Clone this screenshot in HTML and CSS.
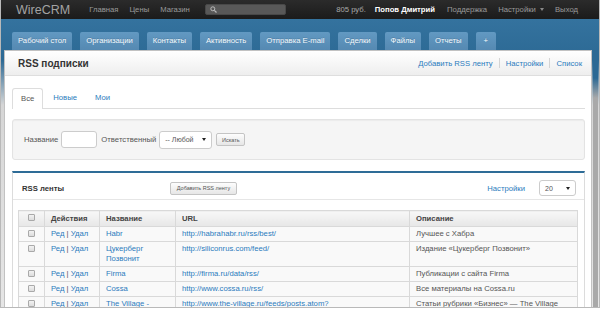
FILE: index.html
```html
<!DOCTYPE html>
<html>
<head>
	<meta charset="utf-8">
	<title>RSS подписки - WireCRM</title>
	<link rel="stylesheet" href="styles.css">
</head>
<body>
<div class="frame">
	<!-- top bar -->
	<div class="topbar">
		<a class="brand" href="#">WireCRM</a>
		<a class="toplink" href="#">Главная</a>
		<a class="toplink" href="#">Цены</a>
		<a class="toplink" href="#">Магазин</a>
		<div class="search">
			<svg width="7" height="7" viewBox="0 0 7 7"><circle cx="2.8" cy="2.8" r="2" fill="none" stroke="#bbb" stroke-width="1"/><path d="M4.3 4.3L6.5 6.5" stroke="#bbb" stroke-width="1.2"/></svg>
		</div>
		<div class="topright">
			<span class="balance">805 руб.</span>
			<b class="user">Попов Дмитрий</b>
			<a class="toplink" href="#">Поддержка</a>
			<a class="toplink" href="#">Настройки <span class="caret"></span></a>
			<a class="toplink last" href="#">Выход</a>
		</div>
	</div>

	<!-- main sections -->
	<div class="mainnav">
		<a href="#">Рабочий стол</a>
		<a href="#">Организации</a>
		<a href="#">Контакты</a>
		<a href="#">Активность</a>
		<a href="#">Отправка E-mail</a>
		<a href="#">Сделки</a>
		<a href="#">Файлы</a>
		<a href="#">Отчеты</a>
		<a class="plus" href="#">+</a>
	</div>

	<div class="workspace">
		<div class="page">
			<div class="page-head">
				<h1>RSS подписки</h1>
				<div class="head-links">
					<a href="#">Добавить RSS ленту</a><span class="sep"></span><a href="#">Настройки</a><span class="sep"></span><a href="#">Список</a>
				</div>
			</div>
			<div class="page-body">
				<div class="tabs">
					<span class="tab active">Все</span>
					<a class="tab" href="#">Новые</a>
					<a class="tab" href="#">Мои</a>
				</div>

				<div class="well">
					<span>Название</span>
					<span class="field"></span>
					<span>Ответственный</span>
					<span class="select wide">-- Любой <i class="arrow"></i></span>
					<span class="btn">Искать</span>
				</div>

				<div class="box">
					<div class="box-head">
						<b class="box-title">RSS ленты</b>
						<span class="btn add">Добавить RSS ленту</span>
						<a class="box-settings" href="#">Настройки</a>
						<span class="select small">20 <i class="arrow"></i></span>
					</div>
					<table class="grid">
						<colgroup>
							<col style="width:26px"><col style="width:55px"><col style="width:76px"><col style="width:234px"><col>
						</colgroup>
						<tr>
							<th class="c"><span class="cb"></span></th>
							<th>Действия</th>
							<th>Название</th>
							<th>URL</th>
							<th>Описание</th>
						</tr>
						<tr>
							<td class="c"><span class="cb"></span></td>
							<td><a href="#">Ред</a> | <a href="#">Удал</a></td>
							<td><a href="#">Habr</a></td>
							<td><a href="#">http://habrahabr.ru/rss/best/</a></td>
							<td>Лучшее с Хабра</td>
						</tr>
						<tr>
							<td class="c"><span class="cb"></span></td>
							<td><a href="#">Ред</a> | <a href="#">Удал</a></td>
							<td><a href="#">Цукерберг Позвонит</a></td>
							<td><a href="#">http://siliconrus.com/feed/</a></td>
							<td>Издание «Цукерберг Позвонит»</td>
						</tr>
						<tr>
							<td class="c"><span class="cb"></span></td>
							<td><a href="#">Ред</a> | <a href="#">Удал</a></td>
							<td><a href="#">Firma</a></td>
							<td><a href="#">http://firma.ru/data/rss/</a></td>
							<td>Публикации с сайта Firma</td>
						</tr>
						<tr>
							<td class="c"><span class="cb"></span></td>
							<td><a href="#">Ред</a> | <a href="#">Удал</a></td>
							<td><a href="#">Cossa</a></td>
							<td><a href="#">http://www.cossa.ru/rss/</a></td>
							<td>Все материалы на Cossa.ru</td>
						</tr>
						<tr>
							<td class="c"><span class="cb"></span></td>
							<td><a href="#">Ред</a> | <a href="#">Удал</a></td>
							<td><a href="#">The Village -</a></td>
							<td><a href="#">http://www.the-village.ru/feeds/posts.atom?</a></td>
							<td>Статьи рубрики «Бизнес» — The Village</td>
						</tr>
					</table>
				</div>
			</div>
		</div>
		<div class="rail"></div>
	</div>
</div>
</body>
</html>
```

FILE: styles.css
```css
* { box-sizing: border-box; }
html, body { margin: 0; padding: 0; background: #fff; }
body { font-family: "Liberation Sans", Arial, sans-serif; font-size: 7.7px; color: #555; }
a { color: #2b7bbd; text-decoration: none; }

.frame { width: 600px; height: 308px; overflow: hidden; display: flex; flex-direction: column;
	border: 1px solid #b9b9b9; border-top: 0;
	background: linear-gradient(#3877a3 0, #2c6994 60px, #d6d6d6 105px, #e6e6e6 100%); }

/* top bar */
.topbar { height: 19px; flex: none; display: flex; align-items: center; padding: 0 21px 0 15px;
	background: linear-gradient(#2b2b2b, #1b1b1b); }
.brand { font-size: 12.5px; color: #a3a3a3; margin-right: 19px; }
.toplink { color: #9a9a9a; margin-right: 11px; }
.toplink.last { margin-right: 0; }
.search { width: 81px; height: 11px; margin-left: 4px; background: #585858; border: 1px solid #484848; border-radius: 2px;
	display: flex; align-items: center; padding-left: 4px; }
.topright { margin-left: auto; display: flex; align-items: center; }
.balance { color: #a8a8a8; margin-right: 9px; }
.user { color: #fff; margin-right: 12px; }
.caret { display: inline-block; width: 0; height: 0; border: 2.5px solid transparent; border-top: 3px solid #888; border-bottom: 0; vertical-align: middle; margin-left: 2px; }

/* main sections */
.mainnav { height: 31px; flex: none; display: flex; align-items: flex-end; gap: 8px; padding-left: 11px; }
.mainnav a { height: 18px; line-height: 18px; padding: 0 6px; color: #f4f8fb; border-radius: 2px 2px 0 0;
	background: linear-gradient(#6299c2, #5589b2); text-shadow: 0 -1px 0 rgba(0,0,0,0.15); }
.mainnav a.plus { padding: 0 8px; }

.workspace { flex: 1; display: flex; padding-left: 3px; min-height: 0; }
.page { width: 588px; background: #fff; border: 1px solid #c2c2c2; border-bottom: 0; }
.rail { width: 5px; margin-left: 1px; background: linear-gradient(#2c6994 0, #2c6994 28px, #a9a9a9 48px, #a9a9a9 100%); }

.page-head { height: 25px; display: flex; align-items: center; justify-content: space-between; padding: 0 9px 0 13px;
	background: linear-gradient(#fff, #eeeeee); border-bottom: 1px solid #dedede; }
.page-head h1 { margin: 0; font-size: 10px; font-weight: bold; color: #333; }
.head-links { display: flex; align-items: center; }
.sep { width: 1px; height: 10px; background: #d4d4d4; margin: 0 6px; }

.page-body { padding: 12px 6px 0 7px; }

/* tabs */
.tabs { display: flex; height: 21px; border-bottom: 1px solid #dddddd; }
.tab { padding: 0 8px; margin-right: 2px; line-height: 20px; }
.tab.active { color: #555; background: #fff; border: 1px solid #dddddd; border-bottom: 0; border-radius: 3px 3px 0 0; height: 21px; }

/* filter */
.well { margin-top: 10px; height: 41px; display: flex; align-items: center; gap: 3px; padding: 0 11px;
	background: #f5f5f5; border: 1px solid #e3e3e3; border-radius: 3px; box-shadow: inset 0 1px 1px rgba(0,0,0,0.04); }
.field { width: 36px; height: 17px; background: #fff; border: 1px solid #cccccc; border-radius: 3px; margin-right: 1px; }
.select { display: flex; align-items: center; background: #fff; border: 1px solid #cccccc; border-radius: 3px; color: #555; padding: 0 5px; }
.select.wide { width: 53px; height: 18px; font-size: 7px; }
.select.small { width: 37px; height: 16px; font-size: 7px; }
.arrow { margin-left: auto; width: 0; height: 0; border: 2px solid transparent; border-top: 3.5px solid #222; border-bottom: 0; }
.btn { display: inline-flex; align-items: center; justify-content: center; font-size: 5.5px; color: #555;
	background: linear-gradient(#fdfdfd, #e6e6e6); border: 1px solid #c4c4c4; border-radius: 2px; }
.well .btn { width: 29px; height: 13px; margin-left: 1px; }

/* list box */
.box { margin-top: 11px; border: 1px solid #dcdcdc; border-top: 2px solid #2e6c97; }
.box-head { height: 27px; display: flex; align-items: center; padding: 4px 8px 0 9px; border-bottom: 1px solid #e6e6e6; }
.box-title { font-size: 7.7px; color: #333; }
.btn.add { width: 67px; height: 13px; margin-left: 106px; }
.box-settings { margin-left: auto; margin-right: 14px; }

.grid { width: 560px; margin: 10px 0 0 5px; border-collapse: collapse; table-layout: fixed; }
.grid th, .grid td { border: 1px solid #d9d9d9; padding: 2px 6px; line-height: 10px; text-align: left; vertical-align: top; }
.grid th { font-weight: bold; color: #444; background: linear-gradient(#f7f7f7, #e7e7e7); padding: 2.5px 6px; }
.grid td { background: #f9f9f9; color: #555; }
.grid .c { padding: 2px 0; text-align: center; }
.cb { display: inline-block; width: 7px; height: 7px; vertical-align: middle; border: 1px solid #a9a9a9; border-radius: 1px;
	background: linear-gradient(#f2f2f2, #dcdcdc); }
```
